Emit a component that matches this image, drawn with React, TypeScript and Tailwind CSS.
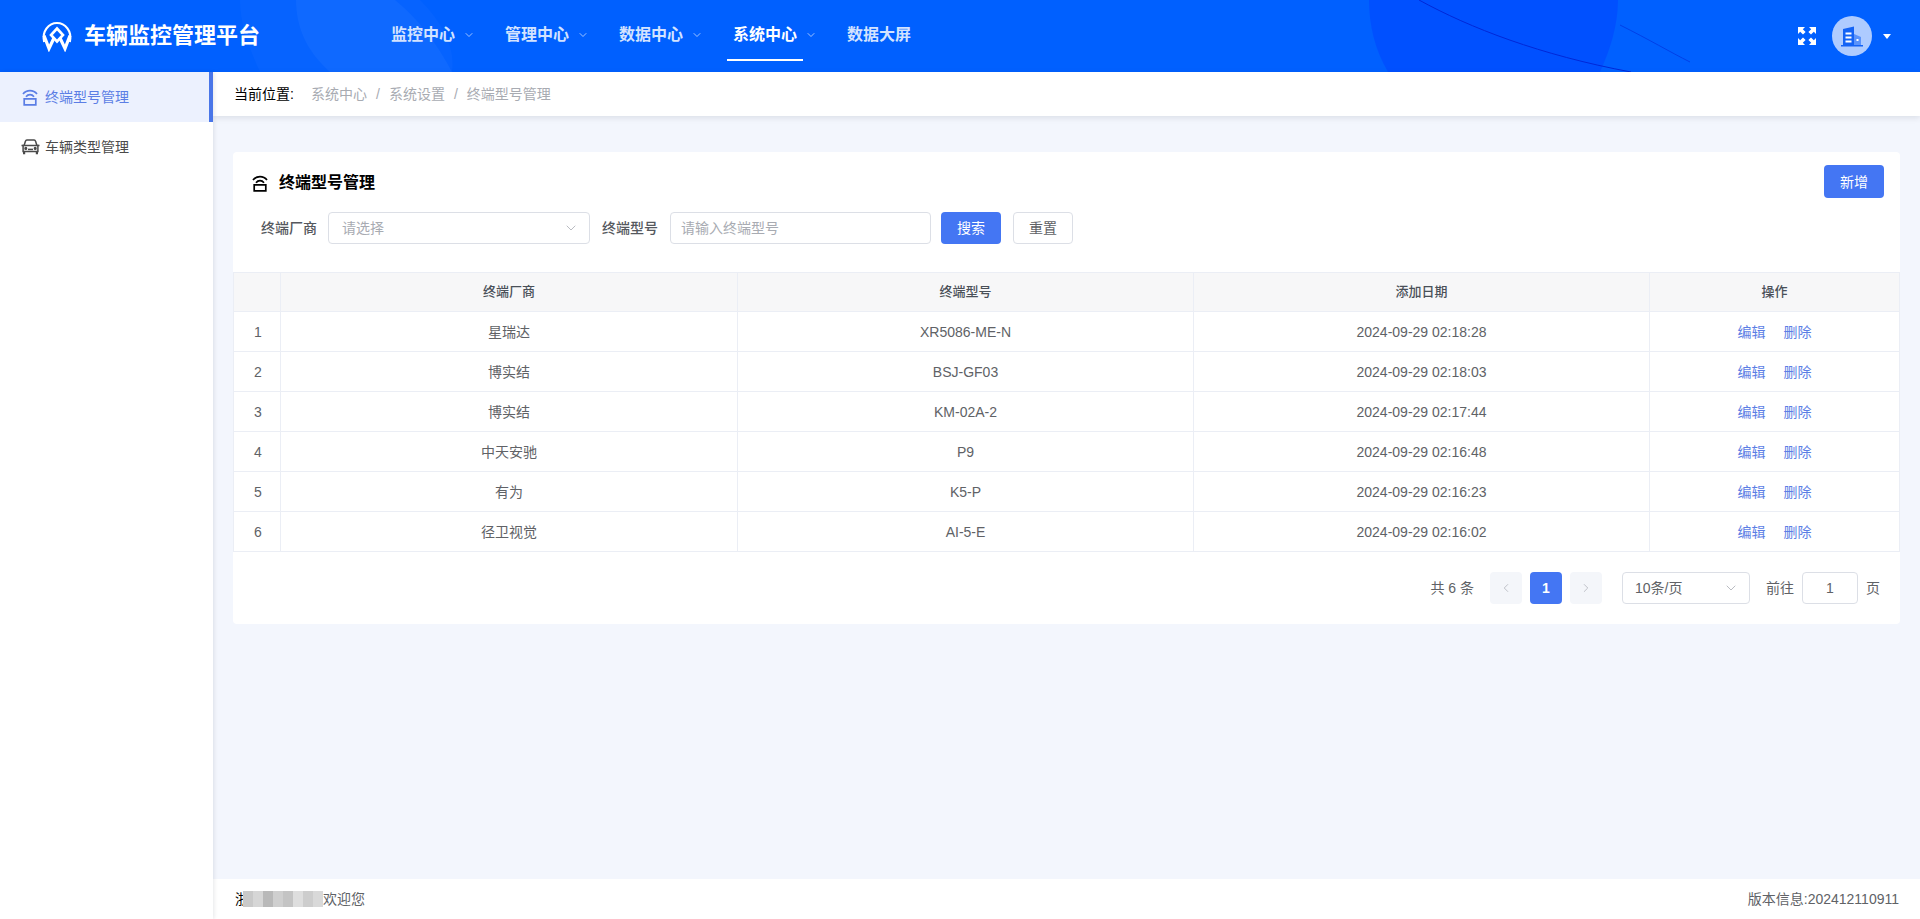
import { ChevronDown, ChevronLeft, ChevronRight } from 'lucide-react';

const navItems = [
  { label: '监控中心', arrow: true },
  { label: '管理中心', arrow: true },
  { label: '数据中心', arrow: true },
  { label: '系统中心', arrow: true, active: true },
  { label: '数据大屏', arrow: false },
];

const rows = [
  { vendor: '星瑞达', model: 'XR5086-ME-N', date: '2024-09-29 02:18:28' },
  { vendor: '博实结', model: 'BSJ-GF03', date: '2024-09-29 02:18:03' },
  { vendor: '博实结', model: 'KM-02A-2', date: '2024-09-29 02:17:44' },
  { vendor: '中天安驰', model: 'P9', date: '2024-09-29 02:16:48' },
  { vendor: '有为', model: 'K5-P', date: '2024-09-29 02:16:23' },
  { vendor: '径卫视觉', model: 'AI-5-E', date: '2024-09-29 02:16:02' },
];

const mosaic = ['#c9c9c9', '#d6d6d6', '#b9b9b9', '#cfcfcf', '#c4c4c4', '#dedede', '#cdcdcd', '#d9d9d9'];

function TerminalIcon({ className = '' }: { className?: string }) {
  return (
    <svg viewBox="0 0 18 18" fill="none" stroke="currentColor" strokeWidth="1.7" className={className}>
      <path d="M2 6C5.5 1.5 12.5 1.5 16 6" />
      <path d="M5 8.8C7.2 6 10.8 6 13 8.8" />
      <path d="M3.2 10.8H14.8V16.8H3.2Z" />
    </svg>
  );
}

function CarIcon({ className = '' }: { className?: string }) {
  return (
    <svg viewBox="0 0 20 18" fill="none" stroke="currentColor" strokeWidth="1.5" className={className}>
      <path d="M3.6 7.5L5 3C5.2 2.3 5.8 2 6.4 2H13.6C14.2 2 14.8 2.3 15 3L16.4 7.5" />
      <path d="M1 7.5H3.2M16.8 7.5H19" />
      <path d="M2.6 7.5H17.4V13.6H2.6Z" />
      <path d="M3.6 13.6V16.2M16.4 13.6V16.2" strokeWidth="2.2" />
      <path d="M7.5 11.4H12.5" />
      <circle cx="5.3" cy="10.4" r="0.8" fill="currentColor" />
      <circle cx="14.7" cy="10.4" r="0.8" fill="currentColor" />
    </svg>
  );
}

function Logo() {
  return (
    <svg viewBox="0 0 32 31" className="w-8 h-[31px] shrink-0" fill="none" stroke="#fff">
      <path d="M3.2 21C0.5 10 8 2 16 2C24 2 31.5 10 28.8 21" strokeWidth="2.2" />
      <path d="M3 14.5L8 27.5L13 17" strokeWidth="3.2" />
      <path d="M29 14.5L24 27.5L19 17" strokeWidth="3.2" />
      <path d="M16 7.5L22 14L16 20.5L10 14Z" strokeWidth="2.6" />
    </svg>
  );
}

function ExpandIcon() {
  return (
    <svg viewBox="0 0 18 18" className="w-[18px] h-[18px]" fill="#fff">
      <path d="M0 0H7L4.8 2.2L7.6 5L5 7.6L2.2 4.8L0 7Z" />
      <path d="M18 0H11L13.2 2.2L10.4 5L13 7.6L15.8 4.8L18 7Z" />
      <path d="M0 18H7L4.8 15.8L7.6 13L5 10.4L2.2 13.2L0 11Z" />
      <path d="M18 18H11L13.2 15.8L10.4 13L13 10.4L15.8 13.2L18 11Z" />
    </svg>
  );
}

function BuildingIcon() {
  return (
    <svg viewBox="0 0 24 24" className="w-6 h-6">
      <path d="M3 5L14 2.5V21H3Z" fill="#1463f5" />
      <path d="M14 10L21 13V21H14Z" fill="#5b93fa" />
      <path d="M5.5 8.5H11.5V10.5H5.5ZM5.5 12.5H11.5V14.5H5.5ZM5.5 16.5H11.5V18.5H5.5Z" fill="#fff" />
      <rect x="16.5" y="15" width="2" height="2" fill="#fff" />
      <rect x="1" y="21" width="22" height="1.5" fill="#1463f5" />
    </svg>
  );
}

function HeaderDecor() {
  return (
    <svg className="absolute inset-0 w-full h-full pointer-events-none" viewBox="0 0 1920 72" preserveAspectRatio="none">
      <path d="M240 0H420C445 25 455 50 452 72H260C250 50 240 25 240 0Z" fill="#fff" opacity="0.025" />
      <path d="M296 0H395C425 25 440 50 452 72H330C305 50 296 25 296 0Z" fill="#fff" opacity="0.04" />
      <path d="M1369 0H1618C1618 25 1610 50 1600 72H1388C1375 50 1369 25 1369 0Z" fill="#0048ff" opacity="0.65" />
      <path d="M1419 0C1470 28 1540 55 1631 72" stroke="#0028d8" strokeWidth="1" fill="none" />
      <path d="M1620 25C1650 40 1670 52 1690 62" stroke="#0040e8" strokeWidth="1" fill="none" />
    </svg>
  );
}

export default function App() {
  return (
    <div className="h-[919px] flex flex-col overflow-hidden bg-[#f3f6fd] text-sm font-['Liberation_Sans','Noto_Sans_CJK_SC',sans-serif]">
      <header className="relative h-[72px] shrink-0 flex items-center bg-[#0060ff] overflow-hidden">
        <HeaderDecor />
        <div className="relative flex items-center gap-[11px] pl-[41px] w-[386px]">
          <Logo />
          <span className="text-[22px] font-bold text-white leading-none">车辆监控管理平台</span>
        </div>
        <nav className="relative flex items-center h-full gap-[24px] ml-[-1px]">
          {navItems.map((item) => (
            <div
              key={item.label}
              className={`relative flex items-center h-full pb-[3px] pl-[6px] w-[90px] whitespace-nowrap text-base ${item.active ? 'text-white font-bold' : 'text-[#d3e3ff] font-semibold'}`}
            >
              <span>{item.label}</span>
              {item.arrow && <ChevronDown size={12} strokeWidth={1.5} className="ml-[8px] shrink-0 text-[#d3e3ff]" />}
              {item.active && <div className="absolute left-0 bottom-[11px] w-[76px] h-[2px] bg-white" />}
            </div>
          ))}
        </nav>
        <div className="relative ml-auto flex items-center pr-[29px]">
          <ExpandIcon />
          <div className="ml-4 w-10 h-10 rounded-full bg-[#aecbff] flex items-center justify-center">
            <BuildingIcon />
          </div>
          <div className="ml-[11px] w-0 h-0 border-x-[4px] border-x-transparent border-t-[5px] border-t-white" />
        </div>
      </header>

      <div className="flex-1 flex min-h-0">
        <aside className="relative z-20 w-[213px] shrink-0 bg-white shadow-[1px_0_4px_rgba(0,21,41,0.1)]">
          <div className="h-[50px] flex items-center gap-[6px] pl-[21px] bg-[#ecf1fe] border-r-4 border-[#4a76e8] text-[#5b7ee5]">
            <TerminalIcon className="w-[18px] h-[18px]" />
            <span>终端型号管理</span>
          </div>
          <div className="h-[50px] flex items-center gap-[4px] pl-[20px] text-[#4a4a4a]">
            <CarIcon className="w-[21px] h-[18px]" />
            <span>车辆类型管理</span>
          </div>
        </aside>

        <main className="flex-1 min-w-0 flex flex-col">
          <div className="relative z-10 h-11 shrink-0 flex items-center pl-[21px] bg-white shadow-[0_2px_6px_rgba(0,21,41,0.1)]">
            <span className="text-black w-[77px]">当前位置:</span>
            <span className="text-[#a8abb2]">系统中心</span>
            <span className="text-[#a8abb2] mx-[9px]">/</span>
            <span className="text-[#a8abb2]">系统设置</span>
            <span className="text-[#a8abb2] mx-[9px]">/</span>
            <span className="text-[#a8abb2]">终端型号管理</span>
          </div>

          <div className="flex-1 min-h-0 pt-9 pl-5 pr-5">
            <section className="bg-white rounded">
              <div className="relative h-[120px] pt-[13px]">
                <div className="flex items-center h-[36px] pl-[18px] mt-0">
                  <TerminalIcon className="w-[18px] h-[18px] text-black" />
                  <span className="ml-[10px] text-base font-semibold text-black">终端型号管理</span>
                </div>
                <button className="absolute right-[16px] top-[13px] w-[60px] h-[33px] rounded bg-[#4476f3] text-white">
                  新增
                </button>
                <div className="flex items-center mt-[11px]">
                  <label className="w-[95px] pr-[11px] text-right font-medium text-[#55585e]">终端厂商</label>
                  <div className="w-[262px] h-8 flex items-center justify-between pl-[13px] pr-[10px] border border-[#dcdfe6] rounded text-[#a8abb2]">
                    <span>请选择</span>
                    <ChevronDown size={16} strokeWidth={1.2} />
                  </div>
                  <label className="ml-3 w-[68px] font-medium text-[#55585e]">终端型号</label>
                  <div className="w-[261px] h-8 flex items-center pl-[10px] border border-[#dcdfe6] rounded text-[#a8abb2]">
                    请输入终端型号
                  </div>
                  <button className="ml-[10px] w-[60px] h-8 rounded bg-[#4476f3] text-white">搜索</button>
                  <button className="ml-3 w-[60px] h-8 rounded bg-white border border-[#dcdfe6] text-[#606266]">重置</button>
                </div>
              </div>

              <table className="w-full table-fixed border-collapse text-center text-[#606266]">
                <colgroup>
                  <col className="w-[47px]" />
                  <col className="w-[457px]" />
                  <col className="w-[456px]" />
                  <col className="w-[456px]" />
                  <col />
                </colgroup>
                <thead>
                  <tr className="h-[39px] bg-[#f7f7f8] text-[13px] text-[#4a5058]">
                    {['', '终端厂商', '终端型号', '添加日期', '操作'].map((title) => (
                      <th key={title} className="border border-[#ebeef5] font-medium">{title}</th>
                    ))}
                  </tr>
                </thead>
                <tbody>
                  {rows.map((row, index) => (
                    <tr key={row.date} className="h-10">
                      <td className="border border-[#ebeef5] pl-[2px]">{index + 1}</td>
                      <td className="border border-[#ebeef5]">{row.vendor}</td>
                      <td className="border border-[#ebeef5]">{row.model}</td>
                      <td className="border border-[#ebeef5]">{row.date}</td>
                      <td className="border border-[#ebeef5] text-[#5b7ee5]">
                        <span>编辑</span>
                        <span className="ml-[18px]">删除</span>
                      </td>
                    </tr>
                  ))}
                </tbody>
              </table>

              <div className="h-[72px] flex items-center justify-end pr-5 text-[#606266]">
                <span className="mr-4">共 6 条</span>
                <div className="w-8 h-8 rounded-sm bg-[#f4f6fa] flex items-center justify-center text-[#a8abb2]">
                  <ChevronLeft size={14} strokeWidth={1.2} />
                </div>
                <div className="ml-2 w-8 h-8 rounded-sm bg-[#4476f3] flex items-center justify-center text-white font-bold">1</div>
                <div className="ml-2 w-8 h-8 rounded-sm bg-[#f4f6fa] flex items-center justify-center text-[#a8abb2]">
                  <ChevronRight size={14} strokeWidth={1.2} />
                </div>
                <div className="ml-5 w-32 h-8 flex items-center justify-between pl-3 pr-[10px] border border-[#dcdfe6] rounded">
                  <span>10条/页</span>
                  <ChevronDown size={16} strokeWidth={1.2} className="text-[#a8abb2]" />
                </div>
                <span className="ml-4">前往</span>
                <div className="ml-2 w-14 h-8 flex items-center justify-center border border-[#dcdfe6] rounded">1</div>
                <span className="ml-2">页</span>
              </div>
            </section>
          </div>

          <footer className="h-10 shrink-0 flex items-center justify-between pl-[22px] pr-[21px] bg-white text-[#606266]">
            <div className="flex items-center">
              <span className="text-black">浙</span>
              <div className="relative flex h-4 w-[80px] ml-[-6px]">
                {mosaic.map((color) => (
                  <div key={color} className="flex-1" style={{ backgroundColor: color }} />
                ))}
              </div>
              <span>欢迎您</span>
            </div>
            <span>版本信息:202412110911</span>
          </footer>
        </main>
      </div>
    </div>
  );
}
